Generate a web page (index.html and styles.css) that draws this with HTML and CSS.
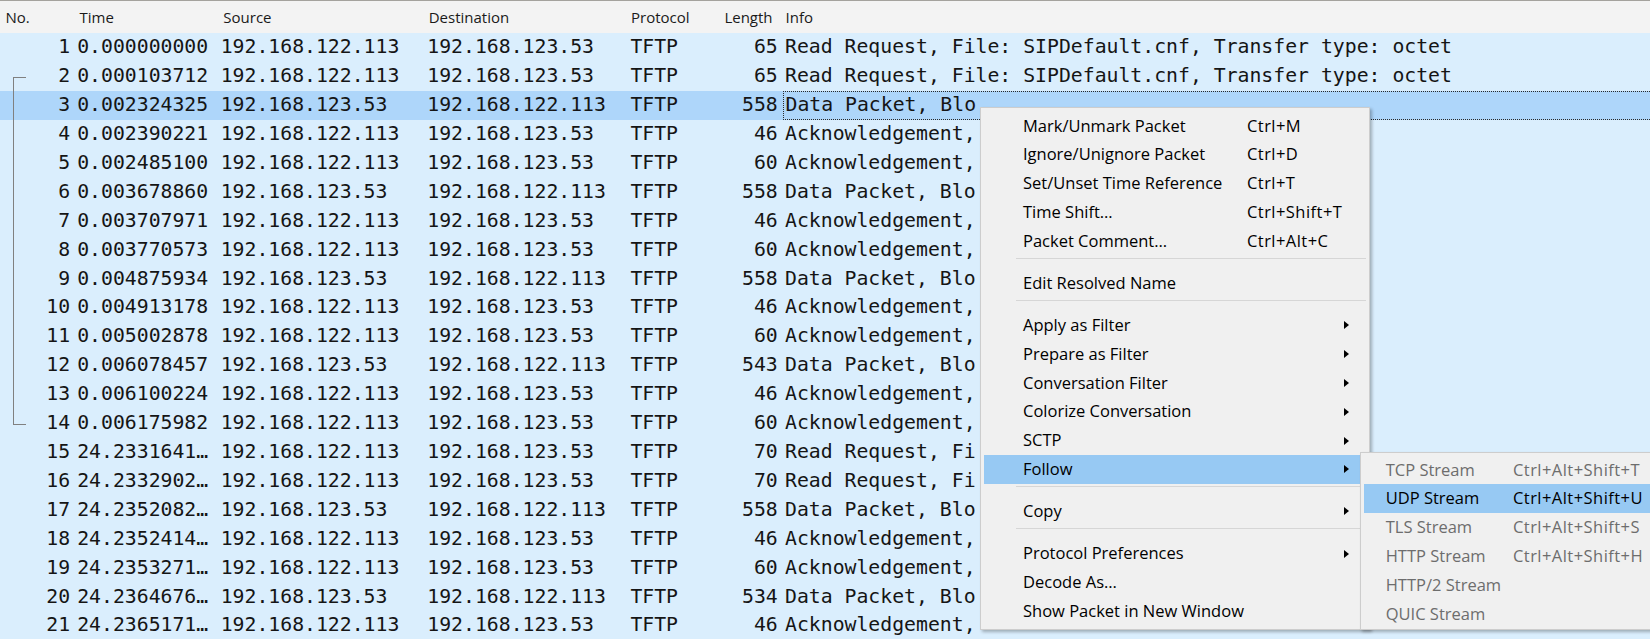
FILE: index.html
```html
<!DOCTYPE html>
<html>
<head>
<meta charset="utf-8">
<title>Packet list</title>
<link rel="stylesheet" href="styles.css">
</head>
<body>
<div class="packet-list">
  <div class="header">
    <span class="h-no">No.</span>
    <span class="h-time">Time</span>
    <span class="h-src">Source</span>
    <span class="h-dst">Destination</span>
    <span class="h-proto">Protocol</span>
    <span class="h-len">Length</span>
    <span class="h-info">Info</span>
  </div>
  <div class="rows">
    <div class="row"><span class="c-no">1</span><span class="c-time">0.000000000</span><span class="c-src">192.168.122.113</span><span class="c-dst">192.168.123.53</span><span class="c-proto">TFTP</span><span class="c-len">65</span><span class="c-info">Read Request, File: SIPDefault.cnf, Transfer type: octet</span></div>
    <div class="row"><span class="c-no rel-first">2</span><span class="c-time">0.000103712</span><span class="c-src">192.168.122.113</span><span class="c-dst">192.168.123.53</span><span class="c-proto">TFTP</span><span class="c-len">65</span><span class="c-info">Read Request, File: SIPDefault.cnf, Transfer type: octet</span></div>
    <div class="row selected"><span class="c-no rel-mid">3</span><span class="c-time">0.002324325</span><span class="c-src">192.168.123.53</span><span class="c-dst">192.168.122.113</span><span class="c-proto">TFTP</span><span class="c-len">558</span><span class="c-info focus">Data Packet, Blo</span></div>
    <div class="row"><span class="c-no rel-mid">4</span><span class="c-time">0.002390221</span><span class="c-src">192.168.122.113</span><span class="c-dst">192.168.123.53</span><span class="c-proto">TFTP</span><span class="c-len">46</span><span class="c-info">Acknowledgement,</span></div>
    <div class="row"><span class="c-no rel-mid">5</span><span class="c-time">0.002485100</span><span class="c-src">192.168.122.113</span><span class="c-dst">192.168.123.53</span><span class="c-proto">TFTP</span><span class="c-len">60</span><span class="c-info">Acknowledgement,</span></div>
    <div class="row"><span class="c-no rel-mid">6</span><span class="c-time">0.003678860</span><span class="c-src">192.168.123.53</span><span class="c-dst">192.168.122.113</span><span class="c-proto">TFTP</span><span class="c-len">558</span><span class="c-info">Data Packet, Blo</span></div>
    <div class="row"><span class="c-no rel-mid">7</span><span class="c-time">0.003707971</span><span class="c-src">192.168.122.113</span><span class="c-dst">192.168.123.53</span><span class="c-proto">TFTP</span><span class="c-len">46</span><span class="c-info">Acknowledgement,</span></div>
    <div class="row"><span class="c-no rel-mid">8</span><span class="c-time">0.003770573</span><span class="c-src">192.168.122.113</span><span class="c-dst">192.168.123.53</span><span class="c-proto">TFTP</span><span class="c-len">60</span><span class="c-info">Acknowledgement,</span></div>
    <div class="row"><span class="c-no rel-mid">9</span><span class="c-time">0.004875934</span><span class="c-src">192.168.123.53</span><span class="c-dst">192.168.122.113</span><span class="c-proto">TFTP</span><span class="c-len">558</span><span class="c-info">Data Packet, Blo</span></div>
    <div class="row"><span class="c-no rel-mid">10</span><span class="c-time">0.004913178</span><span class="c-src">192.168.122.113</span><span class="c-dst">192.168.123.53</span><span class="c-proto">TFTP</span><span class="c-len">46</span><span class="c-info">Acknowledgement,</span></div>
    <div class="row"><span class="c-no rel-mid">11</span><span class="c-time">0.005002878</span><span class="c-src">192.168.122.113</span><span class="c-dst">192.168.123.53</span><span class="c-proto">TFTP</span><span class="c-len">60</span><span class="c-info">Acknowledgement,</span></div>
    <div class="row"><span class="c-no rel-mid">12</span><span class="c-time">0.006078457</span><span class="c-src">192.168.123.53</span><span class="c-dst">192.168.122.113</span><span class="c-proto">TFTP</span><span class="c-len">543</span><span class="c-info">Data Packet, Blo</span></div>
    <div class="row"><span class="c-no rel-mid">13</span><span class="c-time">0.006100224</span><span class="c-src">192.168.122.113</span><span class="c-dst">192.168.123.53</span><span class="c-proto">TFTP</span><span class="c-len">46</span><span class="c-info">Acknowledgement,</span></div>
    <div class="row"><span class="c-no rel-last">14</span><span class="c-time">0.006175982</span><span class="c-src">192.168.122.113</span><span class="c-dst">192.168.123.53</span><span class="c-proto">TFTP</span><span class="c-len">60</span><span class="c-info">Acknowledgement,</span></div>
    <div class="row"><span class="c-no">15</span><span class="c-time">24.2331641…</span><span class="c-src">192.168.122.113</span><span class="c-dst">192.168.123.53</span><span class="c-proto">TFTP</span><span class="c-len">70</span><span class="c-info">Read Request, Fi</span></div>
    <div class="row"><span class="c-no">16</span><span class="c-time">24.2332902…</span><span class="c-src">192.168.122.113</span><span class="c-dst">192.168.123.53</span><span class="c-proto">TFTP</span><span class="c-len">70</span><span class="c-info">Read Request, Fi</span></div>
    <div class="row"><span class="c-no">17</span><span class="c-time">24.2352082…</span><span class="c-src">192.168.123.53</span><span class="c-dst">192.168.122.113</span><span class="c-proto">TFTP</span><span class="c-len">558</span><span class="c-info">Data Packet, Blo</span></div>
    <div class="row"><span class="c-no">18</span><span class="c-time">24.2352414…</span><span class="c-src">192.168.122.113</span><span class="c-dst">192.168.123.53</span><span class="c-proto">TFTP</span><span class="c-len">46</span><span class="c-info">Acknowledgement,</span></div>
    <div class="row"><span class="c-no">19</span><span class="c-time">24.2353271…</span><span class="c-src">192.168.122.113</span><span class="c-dst">192.168.123.53</span><span class="c-proto">TFTP</span><span class="c-len">60</span><span class="c-info">Acknowledgement,</span></div>
    <div class="row"><span class="c-no">20</span><span class="c-time">24.2364676…</span><span class="c-src">192.168.123.53</span><span class="c-dst">192.168.122.113</span><span class="c-proto">TFTP</span><span class="c-len">534</span><span class="c-info">Data Packet, Blo</span></div>
    <div class="row"><span class="c-no">21</span><span class="c-time">24.2365171…</span><span class="c-src">192.168.122.113</span><span class="c-dst">192.168.123.53</span><span class="c-proto">TFTP</span><span class="c-len">46</span><span class="c-info">Acknowledgement,</span></div>
  </div>
</div>

<div class="ctx-menu">
  <div class="mi"><span class="lbl">Mark/Unmark Packet</span><span class="sc">Ctrl+M</span></div>
  <div class="mi"><span class="lbl">Ignore/Unignore Packet</span><span class="sc">Ctrl+D</span></div>
  <div class="mi"><span class="lbl">Set/Unset Time Reference</span><span class="sc">Ctrl+T</span></div>
  <div class="mi"><span class="lbl">Time Shift…</span><span class="sc">Ctrl+Shift+T</span></div>
  <div class="mi"><span class="lbl">Packet Comment…</span><span class="sc">Ctrl+Alt+C</span></div>
  <div class="sep"></div>
  <div class="mi"><span class="lbl">Edit Resolved Name</span></div>
  <div class="sep"></div>
  <div class="mi"><span class="lbl">Apply as Filter</span><span class="sc"></span><span class="arrow"></span></div>
  <div class="mi"><span class="lbl">Prepare as Filter</span><span class="sc"></span><span class="arrow"></span></div>
  <div class="mi"><span class="lbl">Conversation Filter</span><span class="sc"></span><span class="arrow"></span></div>
  <div class="mi"><span class="lbl">Colorize Conversation</span><span class="sc"></span><span class="arrow"></span></div>
  <div class="mi"><span class="lbl">SCTP</span><span class="sc"></span><span class="arrow"></span></div>
  <div class="mi active"><span class="lbl">Follow</span><span class="sc"></span><span class="arrow"></span></div>
  <div class="sep"></div>
  <div class="mi"><span class="lbl">Copy</span><span class="sc"></span><span class="arrow"></span></div>
  <div class="sep"></div>
  <div class="mi"><span class="lbl">Protocol Preferences</span><span class="sc"></span><span class="arrow"></span></div>
  <div class="mi"><span class="lbl">Decode As…</span></div>
  <div class="mi"><span class="lbl">Show Packet in New Window</span></div>
</div>

<div class="submenu">
  <div class="si disabled"><span class="lbl">TCP Stream</span><span class="sc">Ctrl+Alt+Shift+T</span></div>
  <div class="si active"><span class="lbl">UDP Stream</span><span class="sc">Ctrl+Alt+Shift+U</span></div>
  <div class="si disabled"><span class="lbl">TLS Stream</span><span class="sc">Ctrl+Alt+Shift+S</span></div>
  <div class="si disabled"><span class="lbl">HTTP Stream</span><span class="sc">Ctrl+Alt+Shift+H</span></div>
  <div class="si disabled"><span class="lbl">HTTP/2 Stream</span><span class="sc"></span></div>
  <div class="si disabled"><span class="lbl">QUIC Stream</span><span class="sc"></span></div>
</div>
</body>
</html>
```
FILE: styles.css
```css
html, body {
  margin: 0;
  padding: 0;
  height: 100%;
  overflow: hidden;
  background: #daeefd;
}

body {
  position: relative;
  font-family: "Open Sans", "Noto Sans", sans-serif;
}

.packet-list {
  --cols: 72px 145px 207px 202px 94px 63px 1fr;
  width: 100%;
}

.header {
  display: grid;
  grid-template-columns: var(--cols);
  height: 33.3px;
  box-sizing: border-box;
  border-top: 1px solid #a4a29d;
  background: #f3f3f3;
  font-size: 15px;
  line-height: 31.3px;
  padding-top: 1px;
  color: #1a1a1a;
  white-space: nowrap;
}

.h-no { padding-left: 5.5px; }
.h-time { padding-left: 7.5px; }
.h-src { padding-left: 6.3px; }
.h-dst { padding-left: 4.7px; }
.h-proto { padding-left: 5px; }
.h-len { padding-left: 4.4px; }
.h-info { padding-left: 2.6px; }

.row {
  display: grid;
  grid-template-columns: var(--cols);
  height: 28.92px;
  line-height: 28.92px;
  font-family: "DejaVu Sans Mono", "Liberation Mono", monospace;
  font-size: 19.8px;
  color: #151515;
  white-space: nowrap;
  background: #daeefd;
}

.row.selected {
  background: #aed6fa;
}

.row > span {
  overflow: hidden;
}

.c-no {
  position: relative;
  text-align: right;
  padding-right: 1.9px;
  overflow: visible !important;
}
.c-time { padding-left: 5.2px; }
.c-src { padding-left: 3.7px; }
.c-dst { padding-left: 3.3px; }
.c-proto { padding-left: 4.4px; }
.c-len { text-align: right; padding-right: 5.3px; }
.c-info { padding-left: 2px; }

.c-info.focus {
  box-sizing: border-box;
  border: 1px dotted #2a2a2a;
  border-right: none;
  padding-left: 1.5px;
  line-height: 26.92px;
}

/* related-packet bracket */
.rel-first::before,
.rel-mid::before,
.rel-last::before {
  content: "";
  position: absolute;
  left: 13px;
  width: 12px;
  border-left: 1px solid #808080;
}
.rel-first::before {
  top: 50%;
  bottom: 0;
  border-top: 1px solid #808080;
}
.rel-mid::before {
  top: 0;
  bottom: 0;
}
.rel-last::before {
  top: 0;
  height: 50%;
  border-bottom: 1px solid #808080;
}

/* context menu */
.ctx-menu,
.submenu {
  position: absolute;
  box-sizing: border-box;
  background: #f0f0f0;
  border: 1px solid #cdcdcd;
  box-shadow: 2px 2px 3px rgba(0, 0, 0, 0.28);
  font-size: 16.5px;
  color: #000;
  white-space: nowrap;
}

.sc {
  letter-spacing: 0.45px;
}

.ctx-menu {
  left: 980px;
  top: 106.7px;
  width: 390px;
  padding: 4px 0 3px;
}

.mi {
  display: grid;
  grid-template-columns: 224px 97px 5px;
  align-items: center;
  height: 28.8px;
  line-height: 28.8px;
  margin: 0 3px;
  padding-left: 39px;
}

.mi.active,
.si.active {
  background: #97c9f3;
}

.arrow {
  width: 0;
  height: 0;
  border-left: 5px solid #000;
  border-top: 4px solid transparent;
  border-bottom: 4px solid transparent;
}

.sep {
  height: 1px;
  background: #d6d6d6;
  margin: 2.6px 3px 9.7px 35px;
}

.submenu {
  left: 1360px;
  top: 451.7px;
  width: 320px;
  padding: 3px 0 1px;
}

.si {
  display: grid;
  grid-template-columns: 127.3px 1fr;
  height: 28.8px;
  line-height: 28.8px;
  margin: 0 3px;
  padding-left: 21.7px;
}

.si.disabled {
  color: #6d6d6d;
}
```
